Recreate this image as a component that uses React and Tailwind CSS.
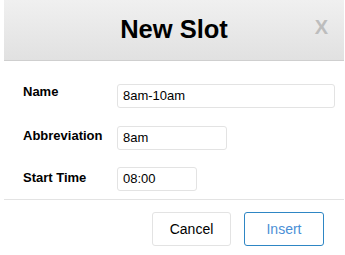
export default function App() {
  const rows = [
    { label: 'Name', value: '8am-10am', width: 'w-[218px]', pt: 'pt-0', mt: 'mt-[23px]' },
    { label: 'Abbreviation', value: '8am', width: 'w-[110px]', pt: 'pt-[2px]', mt: 'mt-[18px]' },
    { label: 'Start Time', value: '08:00', width: 'w-[80px]', pt: 'pt-[3px]', mt: 'mt-[17px]' },
  ];

  return (
    <div className="h-[255px] w-[345px] bg-white font-['Liberation_Sans',Arial,sans-serif] text-black">
      <div className="ml-[4px] w-[340px]">
        {/* Header */}
        <div className="relative flex h-[61px] items-center justify-center border-b border-[#cfcfcf] bg-gradient-to-b from-[#f0f0f0] to-[#e1e1e1]">
          <h1 className="text-[25.5px] font-bold leading-none">New Slot</h1>
          <span className="absolute right-[16px] top-[17px] text-[20px] font-bold leading-none text-[#bdbdbd]">X</span>
        </div>

        {/* Fields */}
        <div className="pl-[19px] pb-[8px]">
          {rows.map((r) => (
            <div key={r.label} className={`flex items-start ${r.mt}`}>
              <label className={`w-[94px] text-[13px] font-bold leading-[15px] ${r.pt}`}>{r.label}</label>
              <div className={`flex h-[24px] items-center rounded-[3px] border border-[#e3e3e3] pl-[5px] text-[13px] ${r.width}`}>
                {r.value}
              </div>
            </div>
          ))}
        </div>

        {/* Footer */}
        <div className="flex justify-end gap-[13px] border-t border-[#e3e3e3] pr-[20px] pt-[12px]">
          <button className="h-[34px] w-[79px] rounded-[3px] border border-[#e3e3e3] bg-white text-[14px] text-black">
            Cancel
          </button>
          <button className="h-[34px] w-[80px] rounded-[3px] border border-[#2e86c4] bg-white text-[14px] text-[#4a8fd6]">
            Insert
          </button>
        </div>
      </div>
    </div>
  );
}
